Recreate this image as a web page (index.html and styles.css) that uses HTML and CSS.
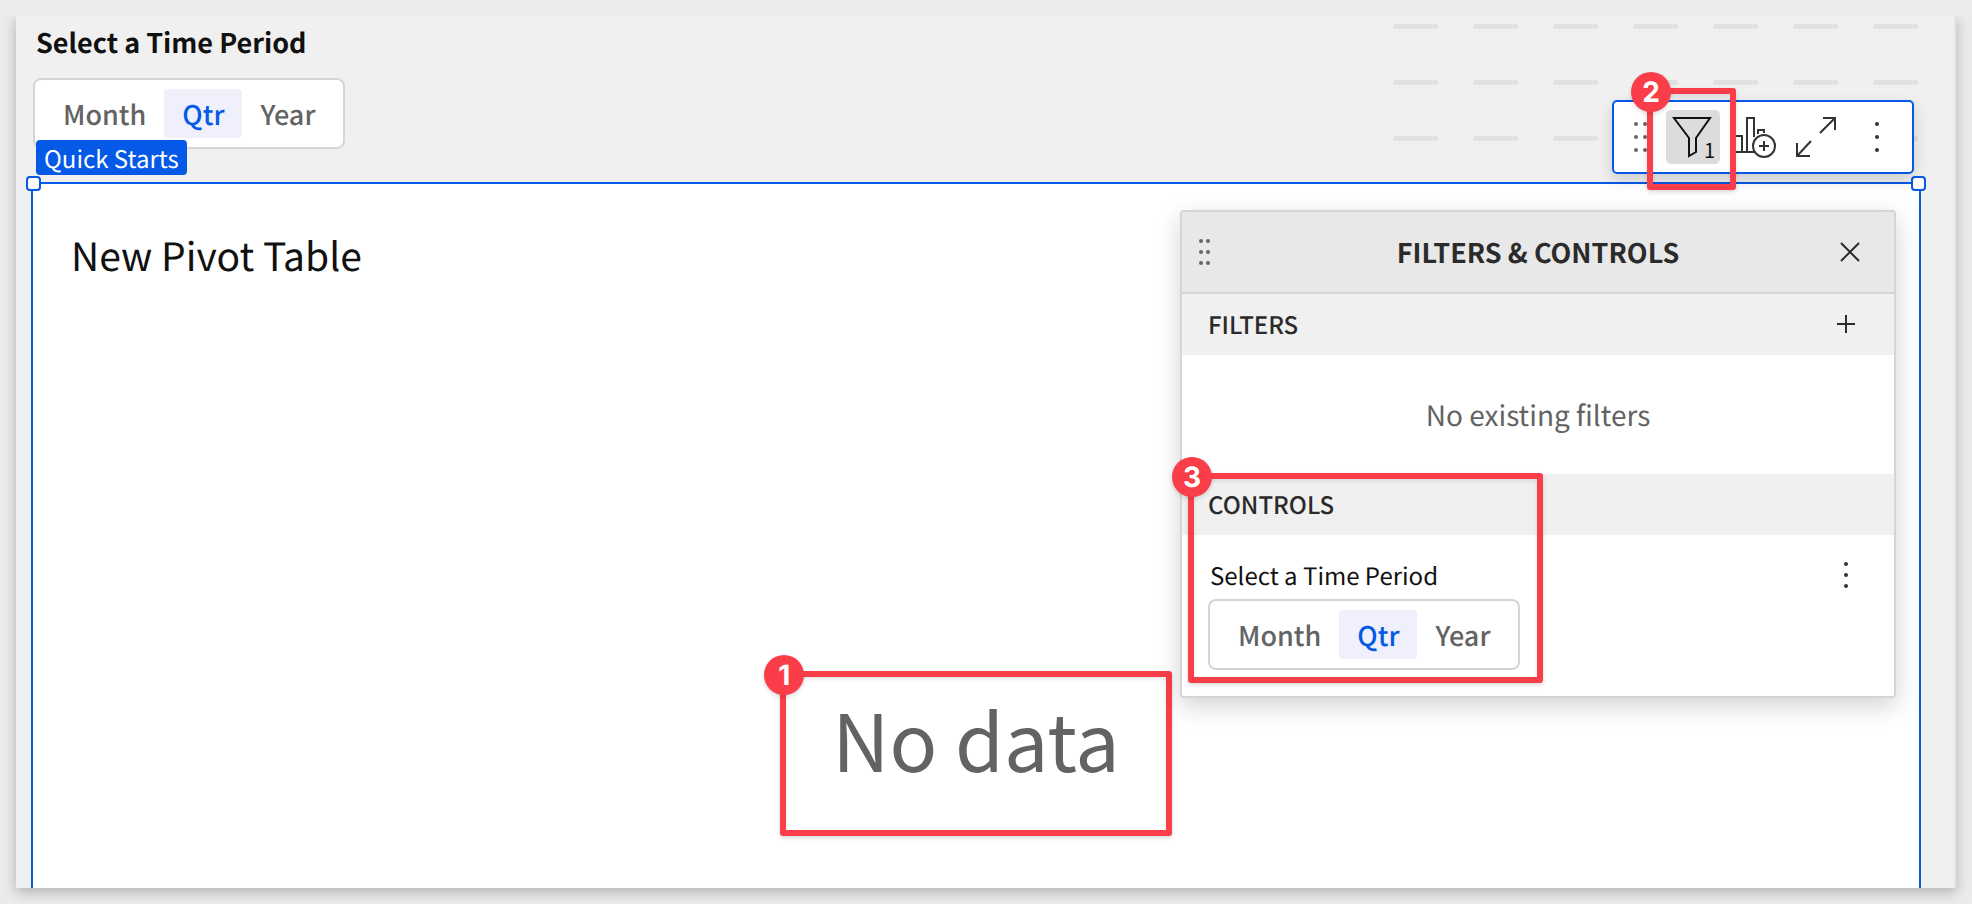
FILE: index.html
```html
<!DOCTYPE html>
<html lang="en">
<head>
<meta charset="utf-8">
<title>Quick Starts</title>
<link rel="stylesheet" href="styles.css">
</head>
<body>
<main class="sheet">
  <svg class="grid-marks" width="525" height="120" aria-hidden="true">
    <defs>
      <pattern id="dash" width="80" height="56" patternUnits="userSpaceOnUse">
        <rect width="45" height="5" rx="2" fill="#e1e1e1"/>
      </pattern>
    </defs>
    <rect width="525" height="120" fill="url(#dash)"/>
  </svg>

  <fieldset class="period">
    <legend class="period-title">Select a Time Period</legend>
    <div class="segments">
      <label class="segment"><input type="radio" name="period"><span>Month</span></label>
      <label class="segment"><input type="radio" name="period" checked><span>Qtr</span></label>
      <label class="segment"><input type="radio" name="period"><span>Year</span></label>
    </div>
  </fieldset>

  <section class="pivot">
    <span class="tag">Quick Starts</span>
    <span class="handle handle-left"></span>
    <span class="handle handle-right"></span>

    <h1 class="pivot-title">New Pivot Table</h1>
    <div class="empty">
      <p class="empty-text">No data</p>
      <div class="callout callout-data"><span class="badge">1</span></div>
    </div>

    <div class="toolbar">
      <button class="tool tool-drag" aria-label="Move">
        <svg width="32" height="54" fill="#666">
          <circle cx="12" cy="14" r="2"/><circle cx="21" cy="14" r="2"/>
          <circle cx="12" cy="27" r="2"/><circle cx="21" cy="27" r="2"/>
          <circle cx="12" cy="40" r="2"/><circle cx="21" cy="40" r="2"/>
        </svg>
      </button>
      <div class="tool-slot">
        <button class="tool tool-filter" aria-label="Filters">
          <svg width="54" height="54" fill="none" stroke="#111" stroke-width="2">
            <path d="M8 8H44L30 28V42L23 46V28Z"/>
          </svg>
          <span class="count">1</span>
        </button>
        <div class="callout callout-filter"><span class="badge">2</span></div>
      </div>
      <button class="tool tool-chart" aria-label="Add child element">
        <svg width="48" height="54" fill="none" stroke="#333" stroke-width="2">
          <path d="M2 42H25M5 42V26H12V42M17 42V8H24V27M28 24V20H34V23"/>
          <circle cx="34" cy="36" r="11"/>
          <path d="M34 31V41M29 36H39"/>
        </svg>
      </button>
      <button class="tool tool-expand" aria-label="Maximize">
        <svg width="56" height="54" fill="none" stroke="#333" stroke-width="2">
          <path d="M35 8H47V20M47 8L32 23M9 33V46H22M9 46L23 31"/>
        </svg>
      </button>
      <button class="tool tool-more" aria-label="More">
        <svg width="46" height="54" fill="#333">
          <circle cx="23" cy="14" r="2"/><circle cx="23" cy="27" r="2"/><circle cx="23" cy="40" r="2"/>
        </svg>
      </button>
    </div>

    <aside class="panel">
      <header class="panel-head">
        <svg class="panel-grip" width="14" height="28" fill="#666">
          <circle cx="3" cy="3" r="2"/><circle cx="10" cy="3" r="2"/>
          <circle cx="3" cy="14" r="2"/><circle cx="10" cy="14" r="2"/>
          <circle cx="3" cy="25" r="2"/><circle cx="10" cy="25" r="2"/>
        </svg>
        <h2 class="panel-title">FILTERS &amp; CONTROLS</h2>
        <button class="icon-button" aria-label="Close">
          <svg width="24" height="24" fill="none" stroke="#2b2b2b" stroke-width="2"><path d="M3 3L21 21M21 3L3 21"/></svg>
        </button>
      </header>
      <div class="section-head">
        <h3 class="section-title">FILTERS</h3>
        <button class="icon-button" aria-label="Add filter">
          <svg width="24" height="24" fill="none" stroke="#2b2b2b" stroke-width="2"><path d="M12 3V21M3 12H21"/></svg>
        </button>
      </div>
      <p class="no-filters">No existing filters</p>
      <div class="controls">
        <div class="section-head"><h3 class="section-title">CONTROLS</h3></div>
        <div class="control-row">
          <fieldset class="period">
            <legend class="control-label">Select a Time Period</legend>
            <div class="segments">
              <label class="segment"><input type="radio" name="panel-period"><span>Month</span></label>
              <label class="segment"><input type="radio" name="panel-period" checked><span>Qtr</span></label>
              <label class="segment"><input type="radio" name="panel-period"><span>Year</span></label>
            </div>
          </fieldset>
          <button class="icon-button" aria-label="Control options">
            <svg width="24" height="28" fill="#333"><circle cx="12" cy="3" r="2"/><circle cx="12" cy="14" r="2"/><circle cx="12" cy="25" r="2"/></svg>
          </button>
        </div>
        <div class="callout callout-controls"><span class="badge">3</span></div>
      </div>
    </aside>
  </section>
</main>
</body>
</html>
```
FILE: styles.css
```css
* {
  box-sizing: border-box;
}

body {
  margin: 0;
  min-height: 100vh;
  padding: 16px;
  display: flex;
  background: #ebebeb;
  font-family: "Noto Sans CJK SC", "Noto Sans", sans-serif;
  text-rendering: geometricPrecision;
  color: #111;
}

h1, h2, h3, p {
  margin: 0;
}

button {
  margin: 0;
  padding: 0;
  border: 0;
  background: none;
  font: inherit;
  color: inherit;
}

svg {
  display: block;
}

.sheet {
  position: relative;
  flex: 1;
  display: flex;
  flex-direction: column;
  padding: 8px 33px 0 15px;
  background: #f0f0f0;
  border-right: 2px solid #e6e6e6;
  box-shadow: 0 4px 12px rgba(0, 0, 0, 0.25);
  clip-path: inset(0 -16px -16px -16px);
}

.grid-marks {
  position: absolute;
  top: 8px;
  right: 36px;
}

.period {
  margin: 0;
  padding: 0;
  border: 0;
  min-width: 0;
}

.sheet > .period {
  margin: 0 2px 33px;
}

.period-title {
  padding: 0 3px 18px;
  font-size: 27px;
  line-height: 36px;
  font-weight: 700;
}

.segments {
  display: inline-flex;
  vertical-align: top;
  padding: 9px 10px;
  background: #fff;
  border: 2px solid #d5d5d5;
  border-radius: 8px;
}

.segment {
  position: relative;
  padding: 0 18px;
  border-radius: 4px;
  font-size: 27px;
  line-height: 49px;
  font-weight: 500;
  color: #636363;
}

.segment input {
  position: absolute;
  inset: 0;
  margin: 0;
  opacity: 0;
}

.segment:has(input:checked) {
  background: #f0f0fd;
  color: #0459e6;
}

.pivot {
  position: relative;
  flex: 1;
  display: flex;
  flex-direction: column;
  padding: 45px 38px 52px;
  background: #fff;
  border: 2px solid #0459e6;
  border-bottom: 0;
}

.pivot-title {
  font-size: 39px;
  line-height: 52px;
  font-weight: 400;
}

.tag {
  position: absolute;
  top: -44px;
  left: 3px;
  padding: 0 8px;
  background: #0459e6;
  border-radius: 4px;
  color: #fff;
  font-size: 24px;
  line-height: 35px;
}

.handle {
  position: absolute;
  top: -8px;
  width: 15px;
  height: 15px;
  background: #fff;
  border: 2px solid #0459e6;
  border-radius: 4px;
}

.handle-left {
  left: -7px;
}

.handle-right {
  right: -7px;
}

.empty {
  position: relative;
  align-self: center;
  margin: auto 0 0;
}

.empty-text {
  padding: 0 52px 32px;
  font-size: 79px;
  line-height: 133px;
  color: #636363;
}

.callout {
  position: absolute;
  border: 6px solid #f93e49;
  border-radius: 3px;
  box-shadow: 0 2px 4px rgba(0, 0, 0, 0.15), inset 0 2px 4px rgba(0, 0, 0, 0.1);
  pointer-events: none;
}

.badge {
  position: absolute;
  top: -22px;
  left: -22px;
  width: 40px;
  border-radius: 50%;
  background: #f93e49;
  box-shadow: 0 2px 4px rgba(0, 0, 0, 0.15);
  color: #fff;
  font-family: Inter, sans-serif;
  font-size: 28px;
  line-height: 40px;
  font-weight: 700;
  text-align: center;
}

.callout-data {
  inset: 0;
}

.toolbar {
  position: absolute;
  top: -84px;
  right: 5px;
  z-index: 2;
  display: flex;
  gap: 10px;
  padding: 8px 12px 8px 10px;
  background: #fff;
  border: 2px solid #0459e6;
  border-radius: 5px;
  box-shadow: 0 6px 16px rgba(0, 0, 0, 0.15);
}

.tool-slot {
  position: relative;
}

.tool-filter {
  position: relative;
  display: block;
  background: #dcdcdc;
  border-radius: 5px;
}

.count {
  position: absolute;
  right: 5px;
  bottom: 2px;
  font-size: 20px;
  line-height: 24px;
}

.callout-filter {
  inset: -22px -16px -26px -19px;
}

.panel {
  position: absolute;
  top: 26px;
  right: 23px;
  width: 716px;
  background: #fff;
  border: 2px solid #d5d5d5;
  border-radius: 4px;
  box-shadow: 0 8px 24px rgba(0, 0, 0, 0.18);
}

.panel-head {
  display: flex;
  align-items: center;
  padding: 0 32px 0 16px;
  background: #e8e8e8;
  border-bottom: 2px solid #d5d5d5;
}

.panel-title {
  flex: 1;
  padding-left: 26px;
  text-align: center;
  font-size: 27px;
  line-height: 80px;
  font-weight: 700;
  color: #2b2b2b;
}

.section-head {
  display: flex;
  align-items: center;
  justify-content: space-between;
  padding: 0 36px 1px 26px;
  background: #f0f0f0;
}

.section-title {
  font-size: 24px;
  line-height: 60px;
  font-weight: 500;
  color: #2b2b2b;
}

.no-filters {
  padding-top: 1px;
  text-align: center;
  font-size: 28px;
  line-height: 118px;
  color: #636363;
}

.controls {
  position: relative;
}

.control-row {
  display: flex;
  justify-content: space-between;
  align-items: flex-start;
  padding: 26px 36px 26px 26px;
}

.control-label {
  padding: 0 2px 10px;
  font-size: 24px;
  line-height: 28px;
}

.callout-controls {
  top: -1px;
  left: 6px;
  width: 355px;
  bottom: 13px;
}
```
